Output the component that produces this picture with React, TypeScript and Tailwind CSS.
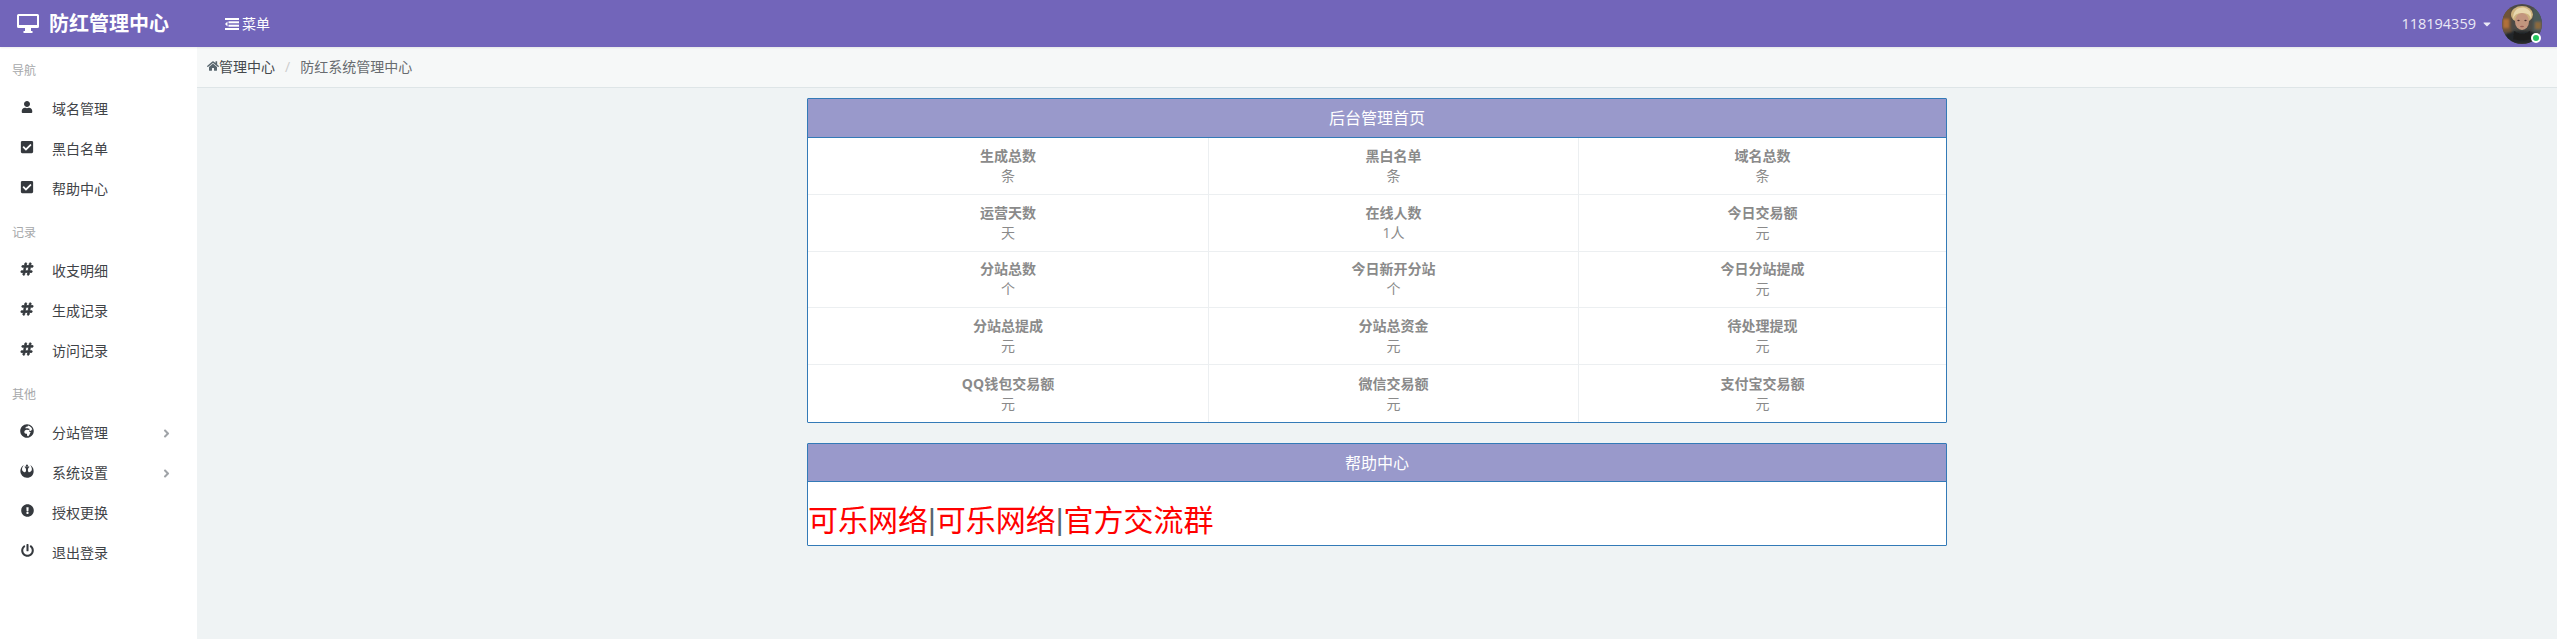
import React from "react";
import { FaUser, FaCheckSquare, FaHashtag, FaGlobeAfrica, FaRebel, FaExclamationCircle, FaPowerOff, FaHome, FaAngleRight, FaCaretDown } from "react-icons/fa";

const font = "font-['Open_Sans','Noto_Sans_CJK_SC',sans-serif]";

type Item = { icon: React.ReactNode; label: string; arrow?: boolean };

const hash = <FaHashtag className="text-[14px]" strokeWidth={30} />;
const groups: { title: string; items: Item[] }[] = [
  {
    title: "导航",
    items: [
      { icon: <FaUser className="text-[12px]" />, label: "域名管理" },
      { icon: <FaCheckSquare className="text-[14px]" />, label: "黑白名单" },
      { icon: <FaCheckSquare className="text-[14px]" />, label: "帮助中心" },
    ],
  },
  {
    title: "记录",
    items: [
      { icon: hash, label: "收支明细" },
      { icon: hash, label: "生成记录" },
      { icon: hash, label: "访问记录" },
    ],
  },
  {
    title: "其他",
    items: [
      { icon: <FaGlobeAfrica className="text-[14px]" />, label: "分站管理", arrow: true },
      { icon: <FaRebel className="text-[14px]" />, label: "系统设置", arrow: true },
      { icon: <FaExclamationCircle className="text-[13px]" />, label: "授权更换" },
      { icon: <FaPowerOff className="text-[13px]" />, label: "退出登录" },
    ],
  },
];

const stats = [
  ["生成总数", "条"], ["黑白名单", "条"], ["域名总数", "条"],
  ["运营天数", "天"], ["在线人数", "1人"], ["今日交易额", "元"],
  ["分站总数", "个"], ["今日新开分站", "个"], ["今日分站提成", "元"],
  ["分站总提成", "元"], ["分站总资金", "元"], ["待处理提现", "元"],
  ["QQ钱包交易额", "元"], ["微信交易额", "元"], ["支付宝交易额", "元"],
];

function DesktopIcon() {
  return (
    <svg viewBox="0 0 22 19" className="w-[22px] h-[19px]" fill="#fff">
      <path fillRule="evenodd" d="M1.5 0h19A1.5 1.5 0 0 1 22 1.5v11a1.5 1.5 0 0 1-1.5 1.5h-19A1.5 1.5 0 0 1 0 12.500v-11A1.500 1.500 0 0 1 1.500 0ZM2 2v9h18V2Z" />
      <path d="M8 14h6v3h1.500v2h-9v-2H8Z" />
    </svg>
  );
}

function MenuIcon() {
  return (
    <svg viewBox="0 0 14 12" className="w-[14px] h-[12px]" fill="#fff">
      <rect x="0" y="0" width="14" height="2" />
      <rect x="3.500" y="3.300" width="10.500" height="2" />
      <rect x="3.500" y="6.700" width="10.500" height="2" />
      <rect x="0" y="10" width="14" height="2" />
      <path d="M2.500 3.500v5L0 6Z" />
    </svg>
  );
}

function Avatar() {
  return (
    <div className="relative w-10 h-10">
      <svg viewBox="0 0 40 40" className="w-10 h-10 rounded-full">
        <defs>
          <filter id="b1"><feGaussianBlur stdDeviation="1.2" /></filter>
          <filter id="b2"><feGaussianBlur stdDeviation="0.6" /></filter>
        </defs>
        <rect width="40" height="40" fill="#4c4a46" />
        <g filter="url(#b1)">
          <rect x="0" y="4" width="9" height="24" fill="#6e5238" />
          <rect x="1" y="15" width="6" height="9" fill="#b06f38" />
          <rect x="31" y="4" width="9" height="24" fill="#4a5a58" />
          <rect x="33" y="18" width="6" height="7" fill="#8c6a3c" />
          <path d="M0 40 L3 31 Q10 26 20 27 Q30 26 37 31 L40 40 Z" fill="#24282a" />
        </g>
        <g filter="url(#b2)">
          <ellipse cx="20" cy="10.500" rx="11" ry="8.500" fill="#cdb27e" />
          <ellipse cx="20" cy="17.500" rx="7" ry="8.500" fill="#c2957e" />
          <path d="M11 15 Q13 8 21 9 Q28 9 29 15 Q31 6 22 3.500 Q11 3 11 15Z" fill="#e8d7ae" />
          <ellipse cx="16.500" cy="16.500" rx="1.200" ry="0.800" fill="#4d3530" />
          <ellipse cx="23.500" cy="16.500" rx="1.200" ry="0.800" fill="#4d3530" />
          <ellipse cx="20" cy="22.500" rx="2" ry="0.700" fill="#9c5f58" />
          <path d="M12 27 Q20 33 28 27 L29 35 Q20 38 11 35Z" fill="#1b1e1e" />
        </g>
      </svg>
      <span className="absolute right-[1px] bottom-[1px] w-[6px] h-[6px] rounded-full bg-[#22c55e] border-2 border-white box-content" />
    </div>
  );
}

function PanelHead({ h, children }: { h: string; children: React.ReactNode }) {
  return (
    <div className={`${h} bg-[#9999cb] border-b border-[#337ab7] flex items-center justify-center text-white text-[16px]`}>
      {children}
    </div>
  );
}

export default function App() {
  return (
    <div className={`${font} h-[639px] w-full bg-[#eff3f4] flex flex-col overflow-hidden text-[14px] text-[#3c3c3c]`}>
      <header className="relative z-10 h-[47px] shrink-0 bg-[#7265ba] flex items-center text-white shadow-[0_1px_2px_rgba(0,0,0,0.08)]">
        <div className="w-[197px] flex items-center pl-[17px] gap-[10px]">
          <DesktopIcon />
          <span className="text-[20px] font-bold">防红管理中心</span>
        </div>
        <div className="flex items-center pl-[28px] gap-[3px] text-[14px]">
          <MenuIcon />
          <span>菜单</span>
        </div>
        <div className="ml-auto flex items-center pr-[15px]">
          <span className="text-[14.500px] text-[#ebe9f6]">118194359</span>
          <FaCaretDown className="text-[12px] ml-[5px] mr-[9px] text-[#ebe9f6]" />
          <Avatar />
        </div>
      </header>

      <div className="flex flex-1 min-h-0">
        <aside className="w-[197px] shrink-0 bg-white pt-[6px]">
          {groups.map((g) => (
            <div key={g.title} className="mb-[6px]">
              <div className="pl-[12px] h-[36px] flex items-center text-[12px] text-[#a6a8aa]">{g.title}</div>
              {g.items.map((it) => (
                <div key={it.label} className="h-[40px] flex items-center relative text-[#3f4347]">
                  <span className="w-[52px] pl-[20px] flex justify-start -mt-[5px] text-[#35393e]">
                    <span className="w-[14px] flex justify-center">{it.icon}</span>
                  </span>
                  <span className="text-[14px] pb-[2px]">{it.label}</span>
                  {it.arrow && <FaAngleRight className="absolute right-[24px] text-[13px] text-[#a0a4a8]" />}
                </div>
              ))}
            </div>
          ))}
        </aside>

        <main className="flex-1 min-w-0 flex flex-col">
          <div className="h-[41px] shrink-0 bg-[#f6f8f8] border-b border-[#dee5e7] flex items-center pl-[10px] pb-[2px]">
            <FaHome className="text-[12px] text-[#58666e]" />
            <span className="text-[#44484c]">管理中心</span>
            <span className="mx-[10px] text-[#ccc]">/</span>
            <span className="text-[#686c70]">防红系统管理中心</span>
          </div>

          <div className="pl-[610px] pt-[10px]">
            <section className="w-[1140px] border border-[#337ab7] rounded-[1px] bg-white">
              <PanelHead h="h-[39px]">后台管理首页</PanelHead>
              <div className="grid grid-cols-[401px_370px_1fr]">
                {stats.map(([a, b], i) => (
                  <div
                    key={a}
                    className={`h-[56.800px] flex flex-col items-center justify-center text-[14px] leading-[20px] border-[#eceff1] ${i < 12 ? "border-b" : ""} ${i % 3 !== 2 ? "border-r" : ""}`}
                  >
                    <span className="font-bold text-[#8a8a8a]">{a}</span>
                    <span className="text-[#8a8a8a]">{b}</span>
                  </div>
                ))}
              </div>
            </section>

            <section className="w-[1140px] mt-[20px] border border-[#337ab7] rounded-[1px] bg-white">
              <PanelHead h="h-[38px] pt-[1px]">帮助中心</PanelHead>
              <div className="h-[63px] flex items-center pt-[14px] text-[30px] leading-none text-[#58666e] whitespace-nowrap">
                <span className="text-[#ff0000]">可乐网络</span>
                <span className="font-['Liberation_Sans',sans-serif]">|</span>
                <span className="text-[#ff0000]">可乐网络</span>
                <span className="font-['Liberation_Sans',sans-serif]">|</span>
                <span className="text-[#ff0000]">官方交流群</span>
              </div>
            </section>
          </div>
        </main>
      </div>
    </div>
  );
}
